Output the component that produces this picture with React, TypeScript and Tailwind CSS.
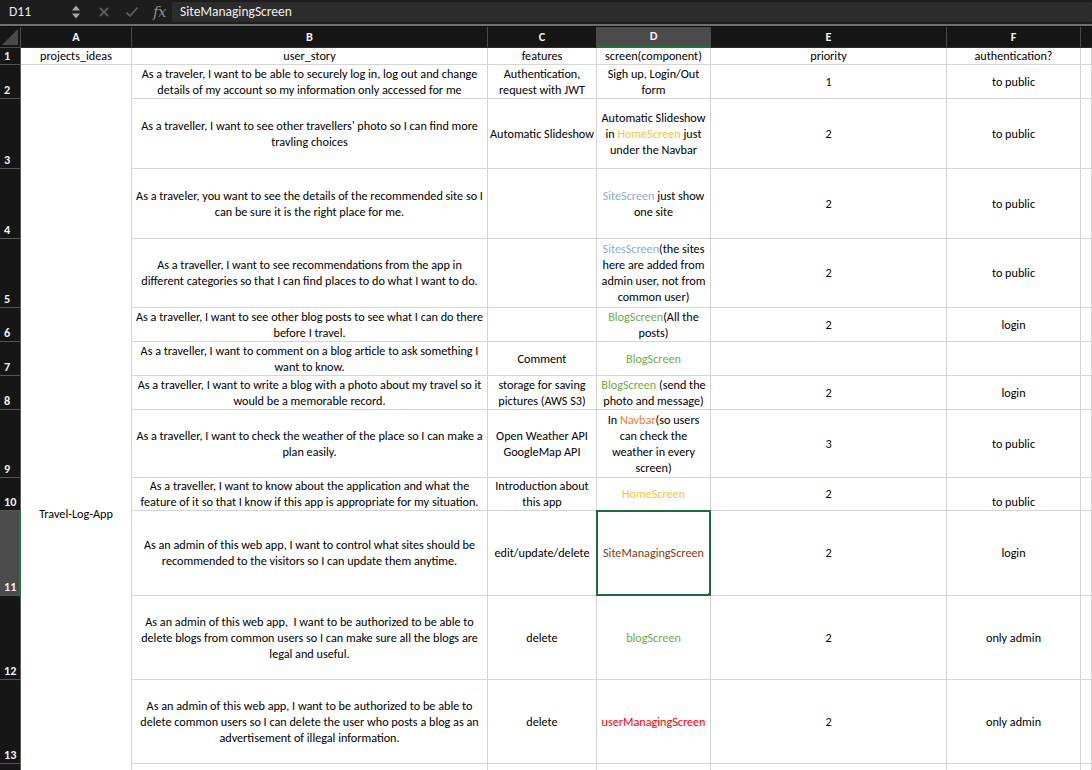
import React from "react";

type Span = { t: string; c: string };
type Line = string | (string | Span)[];

const YEL = "text-[#f7c441]";
const BLU = "text-[#8eaadb]";
const GRN = "text-[#70ad47]";
const ORG = "text-[#ed7d31]";
const BRN = "text-[#843c0c]";
const RED = "text-[#ff0000]";

type Row = {
  n: number;
  b: Line[];
  c: Line[];
  d: Line[];
  e: Line[];
  f: Line[];
  fBottom?: boolean;
};

const data: Row[] = [
  {
    n: 2,
    b: [
      "As a traveler, I want to be able to securely log in, log out and change",
      "details of my account so my information only accessed for me",
    ],
    c: ["Authentication,", "request with JWT"],
    d: ["Sigh up, Login/Out", "form"],
    e: ["1"],
    f: ["to public"],
  },
  {
    n: 3,
    b: [
      "As a traveller, I want to see other travellers' photo so I can find more",
      "travling choices",
    ],
    c: ["Automatic Slideshow"],
    d: ["Automatic Slideshow", ["in ", { t: "HomeScreen", c: YEL }, " just"], "under the Navbar"],
    e: ["2"],
    f: ["to public"],
  },
  {
    n: 4,
    b: [
      "As a traveler, you want to see the details of the recommended site so I",
      "can be sure it is the right place for me.",
    ],
    c: [],
    d: [[{ t: "SiteScreen", c: BLU }, " just show"], "one site"],
    e: ["2"],
    f: ["to public"],
  },
  {
    n: 5,
    b: [
      "As a traveller, I want to see recommendations from the app in",
      "different categories so that I can find places to do what I want to do.",
    ],
    c: [],
    d: [
      [{ t: "SitesScreen", c: BLU }, "(the sites"],
      "here are added from",
      "admin user, not from",
      "common user)",
    ],
    e: ["2"],
    f: ["to public"],
  },
  {
    n: 6,
    b: [
      "As a traveller, I want to see other blog posts to see what I can do there",
      "before I travel.",
    ],
    c: [],
    d: [[{ t: "BlogScreen", c: GRN }, "(All the"], "posts)"],
    e: ["2"],
    f: ["login"],
  },
  {
    n: 7,
    b: [
      "As a traveller, I want to comment on a blog article to ask something I",
      "want to know.",
    ],
    c: ["Comment"],
    d: [[{ t: "BlogScreen", c: GRN }]],
    e: [],
    f: [],
  },
  {
    n: 8,
    b: [
      "As a traveller, I want to write a blog with a photo about my travel so it",
      "would be a memorable record.",
    ],
    c: ["storage for saving", "pictures (AWS S3)"],
    d: [[{ t: "BlogScreen", c: GRN }, " (send the"], "photo and message)"],
    e: ["2"],
    f: ["login"],
  },
  {
    n: 9,
    b: [
      "As a traveller, I want to check the weather of the place so I can make a",
      "plan easily.",
    ],
    c: ["Open Weather API", "GoogleMap API"],
    d: [["In ", { t: "Navbar", c: ORG }, "(so users"], "can check the", "weather in every", "screen)"],
    e: ["3"],
    f: ["to public"],
  },
  {
    n: 10,
    b: [
      "As a traveller, I want to know about the application and what the",
      "feature of it so that I know if this app is appropriate for my situation.",
    ],
    c: ["Introduction about", "this app"],
    d: [[{ t: "HomeScreen", c: YEL }]],
    e: ["2"],
    f: ["to public"],
    fBottom: true,
  },
  {
    n: 11,
    b: [
      "As an admin of this web app, I want to control what sites should be",
      "recommended to the visitors so I can update them anytime.",
    ],
    c: ["edit/update/delete"],
    d: [[{ t: "SiteManagingScreen", c: BRN }]],
    e: ["2"],
    f: ["login"],
  },
  {
    n: 12,
    b: [
      "As an admin of this web app,  I want to be authorized to be able to",
      "delete blogs from common users so I can make sure all the blogs are",
      "legal and useful.",
    ],
    c: ["delete"],
    d: [[{ t: "blogScreen", c: GRN }]],
    e: ["2"],
    f: ["only admin"],
  },
  {
    n: 13,
    b: [
      "As an admin of this web app, I want to be authorized to be able to",
      "delete common users so I can delete the user who posts a blog as an",
      "advertisement of illegal information.",
    ],
    c: ["delete"],
    d: [[{ t: "userManagingScreen", c: RED }]],
    e: ["2"],
    f: ["only admin"],
  },
  {
    n: 14,
    b: [],
    c: [],
    d: [],
    e: [],
    f: [],
  },
];

function renderLine(l: Line, i: number) {
  if (typeof l === "string") return <div key={i}>{l}</div>;
  return (
    <div key={i}>
      {l.map((s, j) =>
        typeof s === "string" ? (
          <span key={j}>{s}</span>
        ) : (
          <span key={j} className={s.c}>
            {s.t}
          </span>
        )
      )}
    </div>
  );
}

function Cell({
  lines,
  bottom,
  selected,
}: {
  lines: Line[];
  bottom?: boolean;
  selected?: boolean;
}) {
  return (
    <div
      className={
        "relative flex flex-col justify-center text-center whitespace-pre border-r border-b border-[#d5d5d5] bg-white text-black leading-[16px] " +
        (bottom ? "items-center justify-end" : "items-center")
      }
    >
      {lines.map(renderLine)}
      {selected && (
        <>
          <div className="pointer-events-none absolute -left-[1px] -top-[1px] -right-[1px] -bottom-[1px] border-2 border-[#1e6b3c]" />
          <div className="absolute -right-[3px] -bottom-[3px] h-[5px] w-[5px] bg-[#1e6b3c]" />
        </>
      )}
    </div>
  );
}

function RowHead({ n, selected, hidden }: { n: number; selected?: boolean; hidden?: boolean }) {
  return (
    <div
      className={
        "flex items-end pl-[4px] font-bold text-[#f2f2f2] leading-[16px] border-b border-[#555555] " +
        (selected ? "bg-[#4b4b4b] border-r-2 border-r-[#217346]" : "bg-[#161616] border-r border-r-[#5c5c5c]")
      }
    >
      {hidden ? null : n}
    </div>
  );
}

function ColHead({ l, selected }: { l: string; selected?: boolean }) {
  return (
    <div
      className={
        "flex items-center justify-center font-bold text-[#f2f2f2] border-r border-[#4a4a4a] " +
        (selected ? "bg-[#4b4b4b] border-b-2 border-b-[#217346]" : "bg-[#161616] border-b border-b-[#2a2a2a]")
      }
    >
      {l}
    </div>
  );
}

export default function App() {
  return (
    <div className="h-[770px] w-[1092px] overflow-hidden bg-[#161616] font-['Carlito','Calibri','Liberation_Sans',sans-serif] text-[12.2px]">
      {/* formula bar */}
      <div className="flex h-[24px] items-center bg-[#1d1d1d] text-[#ececec]">
        <div className="w-[66px] pl-[9px] text-[13.5px]">D11</div>
        <svg width="10" height="16" viewBox="0 0 10 16" className="ml-[5px]">
          <path d="M1 6.5 L5 1.5 L9 6.5 Z" fill="#a6a6a6" />
          <path d="M1 9.5 L5 14.5 L9 9.5 Z" fill="#a6a6a6" />
        </svg>
        <svg width="12" height="12" viewBox="0 0 12 12" className="ml-[17px]">
          <path d="M2 2 L10 10 M10 2 L2 10" stroke="#5e5e5e" strokeWidth="1.8" />
        </svg>
        <svg width="14" height="12" viewBox="0 0 14 12" className="ml-[15px]">
          <path d="M1.5 6.5 L5 10 L12.5 1.5" stroke="#5e5e5e" strokeWidth="1.8" fill="none" />
        </svg>
        <div className="ml-[14px] font-['DejaVu_Serif','Liberation_Serif',serif] italic text-[15px] text-[#8c8c8c] tracking-[-0.5px]">
          fx
        </div>
        <div className="ml-[6px] flex h-[20px] flex-1 items-center rounded-[2px] bg-[#2c2c2c] pl-[8px] text-[13.5px] text-[#f0f0f0]">
          SiteManagingScreen
        </div>
      </div>
      <div className="h-[2px] bg-[#6f6f6f]" />
      <div className="h-[1px] bg-[#0e0e0e]" />

      {/* grid */}
      <div className="grid grid-cols-[21px_111px_356px_109px_114px_236px_134px_1fr] grid-rows-[21px_17px_34px_70px_70px_69px_34px_34px_34px_68px_33px_85px_84px_84px_200px]">
        {/* header */}
        <div className="relative bg-[#161616] border-r border-b border-[#4a4a4a]">
          <svg width="16" height="16" viewBox="0 0 16 16" className="absolute right-[2px] bottom-[2px]">
            <path d="M16 0 L16 16 L0 16 Z" fill="#4a4a4a" />
          </svg>
        </div>
        <ColHead l="A" />
        <ColHead l="B" />
        <ColHead l="C" />
        <ColHead l="D" selected />
        <ColHead l="E" />
        <ColHead l="F" />
        <div className="bg-[#161616] border-b border-b-[#2a2a2a]" />

        {/* row 1 */}
        <RowHead n={1} />
        <Cell lines={["projects_ideas"]} />
        <Cell lines={["user_story"]} />
        <Cell lines={["features"]} />
        <Cell lines={["screen(component)"]} />
        <Cell lines={["priority"]} />
        <Cell lines={["authentication?"]} />
        <Cell lines={[]} />

        {data.map((r) => (
          <React.Fragment key={r.n}>
            <RowHead n={r.n} selected={r.n === 11} hidden={r.n === 14} />
            {r.n === 2 && (
              <div className="row-span-13 flex items-center justify-center border-r border-b border-[#d5d5d5] bg-white text-black leading-[16px]">
                Travel-Log-App
              </div>
            )}
            <Cell lines={r.b} />
            <Cell lines={r.c} />
            <Cell lines={r.d} selected={r.n === 11} />
            <Cell lines={r.e} />
            <Cell lines={r.f} bottom={r.fBottom} />
            <Cell lines={[]} />
          </React.Fragment>
        ))}
      </div>
    </div>
  );
}
